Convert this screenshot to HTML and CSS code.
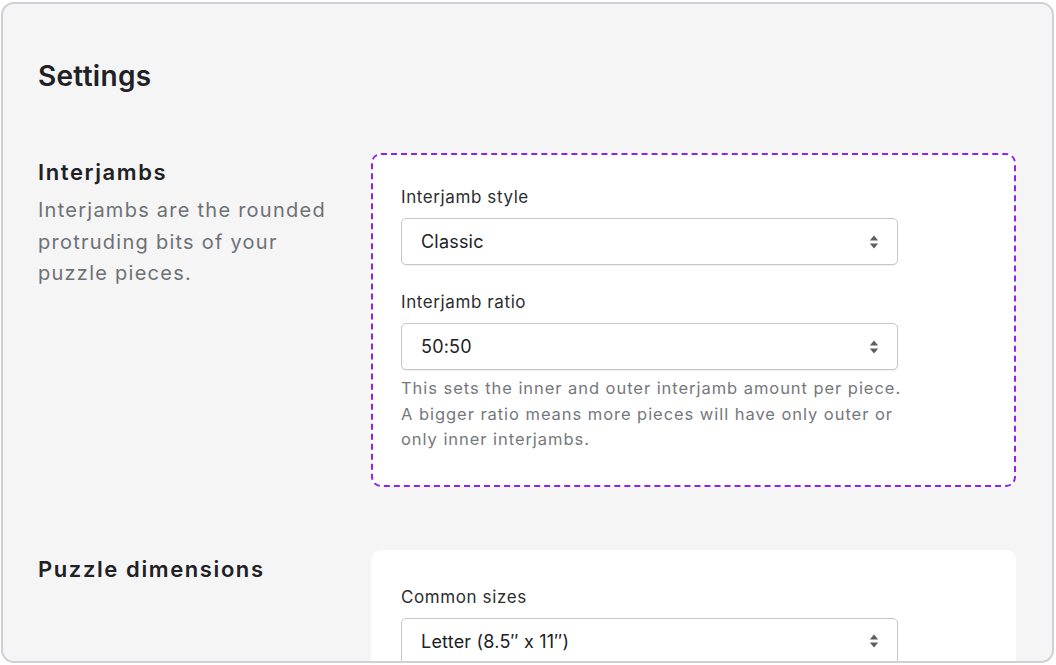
FILE: index.html
```html
<!DOCTYPE html>
<html lang="en">
<head>
<meta charset="utf-8">
<title>Settings</title>
<link rel="stylesheet" href="styles.css">
</head>
<body>
<div class="frame">
  <h1 class="page-title">Settings</h1>

  <section class="section">
    <div class="section-info">
      <h2 class="section-title">Interjambs</h2>
      <p class="section-desc">Interjambs are the rounded protruding bits of your puzzle pieces.</p>
    </div>
    <div class="card card-dashed">
      <div class="field">
        <label class="field-label">Interjamb style</label>
        <div class="select">
          <span class="select-value">Classic</span>
          <svg class="select-icon" width="10" height="14" viewBox="0 0 10 14"><path d="M5 0.5 L9.2 5.5 H0.8 Z M5 13.5 L9.2 8.5 H0.8 Z" fill="#5c5f62"/></svg>
        </div>
      </div>
      <div class="field">
        <label class="field-label">Interjamb ratio</label>
        <div class="select">
          <span class="select-value">50:50</span>
          <svg class="select-icon" width="10" height="14" viewBox="0 0 10 14"><path d="M5 0.5 L9.2 5.5 H0.8 Z M5 13.5 L9.2 8.5 H0.8 Z" fill="#5c5f62"/></svg>
        </div>
        <p class="field-help">This sets the inner and outer interjamb amount per piece. A bigger ratio means more pieces will have only outer or only inner interjambs.</p>
      </div>
    </div>
  </section>

  <section class="section">
    <div class="section-info">
      <h2 class="section-title">Puzzle dimensions</h2>
    </div>
    <div class="card card-plain">
      <div class="field">
        <label class="field-label">Common sizes</label>
        <div class="select">
          <span class="select-value">Letter (8.5″ x 11″)</span>
          <svg class="select-icon" width="10" height="14" viewBox="0 0 10 14"><path d="M5 0.5 L9.2 5.5 H0.8 Z M5 13.5 L9.2 8.5 H0.8 Z" fill="#5c5f62"/></svg>
        </div>
      </div>
    </div>
  </section>
</div>
</body>
</html>
```

FILE: styles.css
```css
* { box-sizing: border-box; }

html, body {
  margin: 0;
  padding: 0;
  background: #ffffff;
}

body {
  font-family: Inter, "Noto Sans", "Liberation Sans", sans-serif;
  color: #202124;
  width: 1056px;
  height: 665px;
  overflow: hidden;
}

.frame {
  margin: 2px 2px 0 1px;
  height: 661px;
  border: 2px solid #cdd0d4;
  border-radius: 13px;
  background: #f5f5f5;
  overflow: hidden;
  padding: 56px 36px 0 35px;
}

.page-title {
  margin: 0 0 61px;
  font-size: 28px;
  line-height: 32px;
  font-weight: 600;
  color: #202124;
  letter-spacing: 0.3px;
}

.section {
  display: grid;
  grid-template-columns: 300px 1fr;
  column-gap: 33px;
  align-items: start;
  margin-bottom: 63px;
}

.section-info {
  padding-top: 5px;
}

.section-title {
  margin: 0;
  font-size: 22px;
  line-height: 28px;
  font-weight: 600;
  color: #202124;
  letter-spacing: 1.6px;
}

.section-desc {
  margin: 9px 0 0;
  font-size: 20px;
  line-height: 31.5px;
  color: #6d7175;
  letter-spacing: 1.25px;
}

.card {
  background: #ffffff;
  border-radius: 10px;
  border: 2px solid transparent;
  padding: 31px 28px 32px 28px;
  display: flex;
  flex-direction: column;
  gap: 26px;
}

.card-dashed {
  border: 2px dashed #8f22ef;
}

.card-plain {
  padding-top: 34px;
}

.field {
  width: 503px;
  display: flex;
  flex-direction: column;
}

.field-label {
  font-size: 17px;
  line-height: 22px;
  color: #2b2d30;
  margin-bottom: 10px;
  letter-spacing: 0.6px;
}

.select {
  width: 497px;
  height: 47px;
  background: #ffffff;
  border: 1px solid #c4c7cb;
  border-radius: 5px;
  box-shadow: 0 1px 0 rgba(0, 0, 0, 0.05);
  display: flex;
  align-items: center;
  justify-content: space-between;
  padding: 0 18px 0 19px;
}

.select-value {
  font-size: 18px;
  color: #202124;
  letter-spacing: 0.2px;
}

.select-icon {
  display: block;
}

.field-help {
  margin: 6px 0 0;
  font-size: 16.5px;
  line-height: 25.5px;
  color: #75787d;
  letter-spacing: 0.95px;
}
```
